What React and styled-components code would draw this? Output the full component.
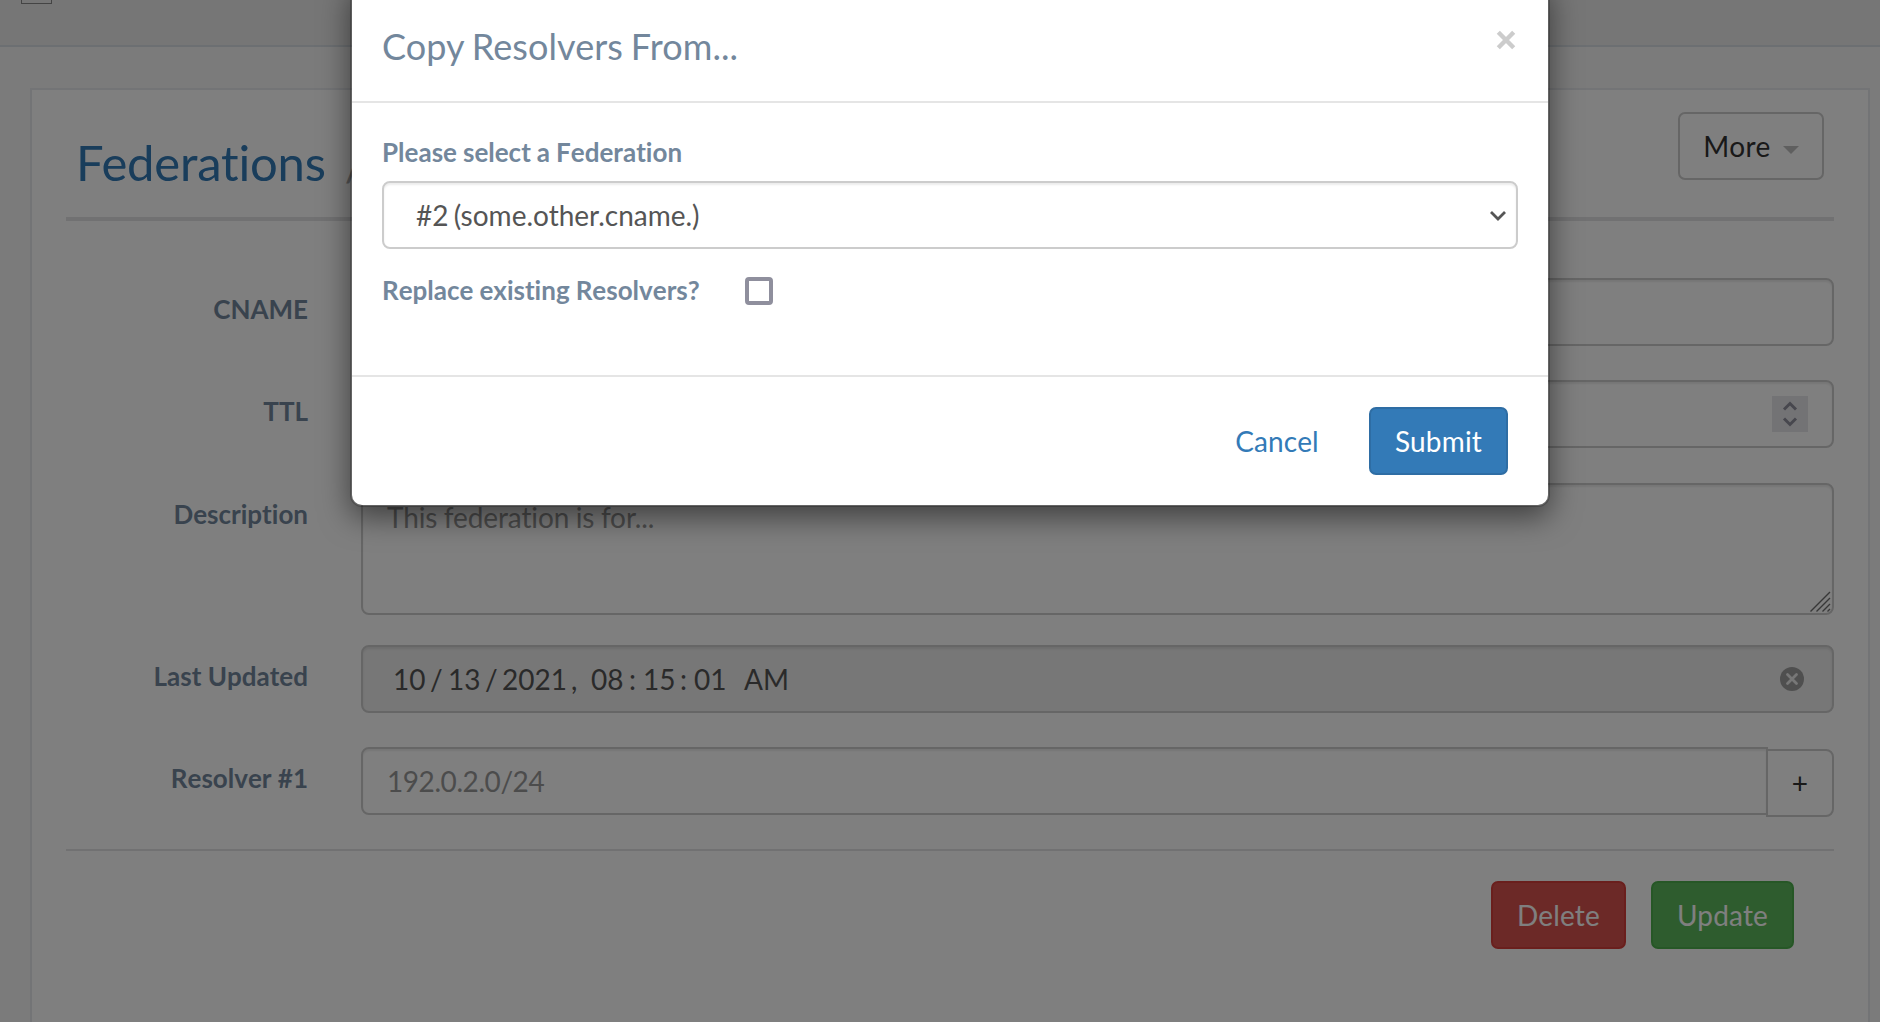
import React from "react";
import styled, { createGlobalStyle } from "styled-components";

const GlobalStyle = createGlobalStyle`
  *, *::before, *::after { box-sizing: border-box; }
  html, body { margin: 0; height: 100%; overflow: hidden; }
  body {
    background: #f7f7f7;
    color: #73879c;
    font-family: Lato, Carlito, "Liberation Sans", sans-serif;
    font-size: 26px;
    line-height: 37px;
    font-variant-ligatures: none;
  }
`;

const Page = styled.div`
  position: relative;
  width: 100%;
  height: 1022px;
  overflow: hidden;
`;

const TopBar = styled.header`
  height: 47px;
  padding-left: 21px;
  background: #ededed;
  border-bottom: 2px solid #d9dee4;
`;

const MenuToggle = styled.div`
  width: 31px;
  height: 4px;
  border: 1px solid #888;
  border-top: 0;
`;

const Panel = styled.section`
  margin: 41px 10px 0 30px;
  height: 1000px;
  padding: 22px 34px 0;
  background: #fff;
  border: 2px solid #e6e9ed;
`;

const PanelHeader = styled.div`
  display: flex;
  justify-content: space-between;
  align-items: flex-start;
  height: 109px;
  padding: 0 10px;
  border-bottom: 4px solid #e2e3e5;
`;

const PanelTitle = styled.h2`
  display: flex;
  align-items: baseline;
  gap: 19px;
  margin: 20px 0 0;
  font-size: 49px;
  font-weight: 400;
  line-height: 60px;
  letter-spacing: -0.2px;
  color: #337ab7;
`;

const Separator = styled.span`
  font-size: 42px;
  color: #aaa;
`;

const palettes = {
  default: ["#fff", "#ccc", "#333"],
  primary: ["#337ab7", "#2e6da4", "#fff"],
  danger: ["#d9534f", "#d43f3a", "#fff"],
  success: ["#5cb85c", "#4cae4c", "#fff"],
  link: ["transparent", "transparent", "#337ab7"],
};

const Button = styled.button`
  display: flex;
  align-items: center;
  justify-content: center;
  width: ${(p) => p.$width}px;
  height: 68px;
  padding: 0;
  font: 400 28px/40px Lato, Carlito, sans-serif;
  letter-spacing: 0.15px;
  border: 2px solid ${(p) => palettes[p.$kind][1]};
  border-radius: 7px;
  background: ${(p) => palettes[p.$kind][0]};
  color: ${(p) => palettes[p.$kind][2]};
`;

const MoreButton = styled(Button)`
  gap: 12px;
`;

const MoreText = styled.span`
  letter-spacing: 0.4px;
`;

const Caret = styled.span`
  margin-top: 8px;
  border: 8px solid transparent;
  border-top-color: #bebebe;
  border-bottom: 0;
`;

const Form = styled.form`
  padding-top: 57px;
`;

const FormRow = styled.div`
  display: grid;
  grid-template-columns: 242px 1fr;
  column-gap: 53px;
  margin-bottom: ${(p) => p.$gap ?? 34}px;
`;

const FieldLabel = styled.label`
  padding-top: 13px;
  font-weight: 700;
  font-kerning: none;
  text-align: right;
`;

const Field = styled.div`
  display: flex;
  align-items: center;
  flex: 1;
  height: 68px;
  padding: 0 24px;
  font-size: 28px;
  line-height: 40px;
  color: ${(p) => (p.$placeholder ? "#999" : "#555")};
  background: ${(p) => (p.$disabled ? "#eee" : "#fff")};
  border: 2px solid #ccc;
  border-radius: 8px;
  box-shadow: inset 0 2px 2px rgba(0, 0, 0, 0.075);
`;

const NumberField = styled(Field)`
  justify-content: flex-end;
`;

const TextArea = styled(Field)`
  align-items: flex-start;
  justify-content: space-between;
  height: 132px;
  padding: 12px 1px 1px 24px;
  letter-spacing: -0.12px;
  word-spacing: -0.5px;
`;

const ResizeGrip = styled.svg`
  align-self: flex-end;
`;

const DateField = styled(Field)`
  justify-content: space-between;
`;

const DateParts = styled.div`
  display: flex;
  padding-left: 6px;
`;

const DatePart = styled.span`
  width: ${(p) => p.$width}px;
  white-space: pre;
`;

const InputGroup = styled.div`
  display: flex;
`;

const GroupField = styled(Field)`
  border-radius: 8px 0 0 8px;
  letter-spacing: -0.43px;
`;

const AddButton = styled(Button)`
  margin: 2px 0 0 -2px;
  border-radius: 0 8px 8px 0;
  background: transparent;
`;

const Divider = styled.hr`
  margin: 0;
  border: 0;
  border-top: 2px solid #e2e3e5;
`;

const FormActions = styled.div`
  display: flex;
  justify-content: flex-end;
  gap: 25px;
  padding: 30px 40px 0 0;
`;

const Backdrop = styled.div`
  position: absolute;
  inset: 0;
  background: rgba(0, 0, 0, 0.5);
`;

const Modal = styled.div`
  position: absolute;
  top: -20px;
  left: 350px;
  width: 1200px;
  height: 527px;
  background: #fff;
  background-clip: padding-box;
  border: 2px solid rgba(0, 0, 0, 0.2);
  border-radius: 12px;
  box-shadow: 0 10px 30px rgba(0, 0, 0, 0.5);
`;

const ModalHeader = styled.div`
  display: flex;
  justify-content: space-between;
  align-items: flex-start;
  height: 121px;
  padding: 37px 30px 0;
  border-bottom: 2px solid #e5e5e5;
`;

const ModalTitle = styled.h4`
  margin: 0;
  padding-top: 1px;
  font-size: 36px;
  font-weight: 400;
  line-height: 52px;
  letter-spacing: 0.08px;
  word-spacing: -1.4px;
`;

const CloseIcon = styled.svg`
  margin-top: 9px;
`;

const ModalBody = styled.div`
  height: 272px;
  padding: 31px 30px 0;
`;

const ModalLabel = styled.label`
  display: block;
  font-weight: 700;
  font-kerning: none;
  word-spacing: -0.3px;
`;

const Select = styled(Field)`
  justify-content: space-between;
  margin-top: 10px;
  padding: 0 10px 0 32px;
  word-spacing: -2px;
`;

const SelectArrow = styled.svg`
  margin-top: 2px;
`;

const CheckRow = styled.div`
  display: flex;
  align-items: center;
  justify-content: space-between;
  width: 391px;
  margin-top: 23px;
`;

const Checkbox = styled.span`
  width: 28px;
  height: 28px;
  border: 4px solid #8f8f9d;
  border-radius: 4px;
`;

const ModalFooter = styled.div`
  display: flex;
  justify-content: flex-end;
  gap: 23px;
  padding: 30px 40px 0 0;
  border-top: 2px solid #e5e5e5;
`;

const dateParts = [
  ["10", 37],
  ["/", 18],
  ["13", 37],
  ["/", 17],
  ["2021", 69],
  [",", 20],
  ["08", 38],
  [":", 14],
  ["15", 37],
  [":", 14],
  ["01", 50],
  ["AM", 50],
];

export default function App() {
  return (
    <Page>
      <GlobalStyle />
      <TopBar>
        <MenuToggle />
      </TopBar>
      <Panel>
        <PanelHeader>
          <PanelTitle>
            Federations <Separator>/</Separator>
          </PanelTitle>
          <MoreButton $kind="default" $width={146}>
            <MoreText>More</MoreText>
            <Caret />
          </MoreButton>
        </PanelHeader>
        <Form>
          <FormRow>
            <FieldLabel>CNAME</FieldLabel>
            <Field />
          </FormRow>
          <FormRow $gap={35}>
            <FieldLabel>TTL</FieldLabel>
            <NumberField>
              <svg width="36" height="36" viewBox="0 0 36 36">
                <rect width="36" height="36" fill="#e6e6ea" />
                <path d="M12 13.5 18 7.5 24 13.5M12 22.5 18 28.5 24 22.5" fill="none" stroke="#8f8f9d" strokeWidth="3" />
              </svg>
            </NumberField>
          </FormRow>
          <FormRow $gap={30}>
            <FieldLabel>Description</FieldLabel>
            <TextArea $placeholder>
              <span>This federation is for...</span>
              <ResizeGrip width="21" height="21" viewBox="0 0 21 21" stroke="#707070" strokeWidth="1.4">
                <path d="M0.5 20.5 20 1M6.5 20.5 20 7M12.5 20.5 20 13M17.5 20.5 20 18" />
              </ResizeGrip>
            </TextArea>
          </FormRow>
          <FormRow>
            <FieldLabel>Last Updated</FieldLabel>
            <DateField $disabled>
              <DateParts>
                {dateParts.map(([text, width], i) => (
                  <DatePart key={i} $width={width}>{text}</DatePart>
                ))}
              </DateParts>
              <svg width="32" height="24" viewBox="0 0 32 24">
                <circle cx="16" cy="12" r="12" fill="#9f9f9f" />
                <path d="M11.5 7.5 20.5 16.5M20.5 7.5 11.5 16.5" stroke="#eee" strokeWidth="2.8" strokeLinecap="round" />
              </svg>
            </DateField>
          </FormRow>
          <FormRow $gap={32}>
            <FieldLabel>Resolver #1</FieldLabel>
            <InputGroup>
              <GroupField $placeholder>192.0.2.0/24</GroupField>
              <AddButton type="button" $kind="default" $width={68}>+</AddButton>
            </InputGroup>
          </FormRow>
          <Divider />
          <FormActions>
            <Button type="button" $kind="danger" $width={135}>Delete</Button>
            <Button type="button" $kind="success" $width={143}>Update</Button>
          </FormActions>
        </Form>
      </Panel>
      <Backdrop />
      <Modal>
        <ModalHeader>
          <ModalTitle>Copy Resolvers From...</ModalTitle>
          <CloseIcon width="24" height="24" viewBox="0 0 24 24" stroke="#ccc" strokeWidth="4.4">
            <path d="M4.3 4.3 19.7 19.7M19.7 4.3 4.3 19.7" />
          </CloseIcon>
        </ModalHeader>
        <ModalBody>
          <ModalLabel>Please select a Federation</ModalLabel>
          <Select>
            <span>#2 (some.other.cname.)</span>
            <SelectArrow width="16" height="10" viewBox="0 0 16 10">
              <path d="M1 1 8 8 15 1" fill="none" stroke="#555" strokeWidth="2.8" />
            </SelectArrow>
          </Select>
          <CheckRow>
            <ModalLabel>Replace existing Resolvers?</ModalLabel>
            <Checkbox />
          </CheckRow>
        </ModalBody>
        <ModalFooter>
          <Button $kind="link" $width={138}>Cancel</Button>
          <Button $kind="primary" $width={139}>Submit</Button>
        </ModalFooter>
      </Modal>
    </Page>
  );
}
